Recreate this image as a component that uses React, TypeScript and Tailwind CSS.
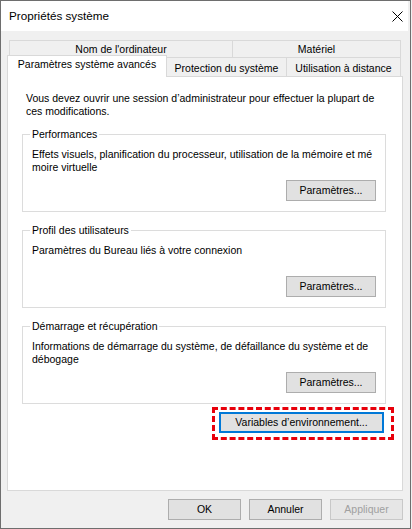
import type { ReactNode } from 'react';

type BtnProps = {
  children: ReactNode;
  className?: string;
  disabled?: boolean;
};

const Btn = ({ children, className = '', disabled }: BtnProps) => (
  <button
    className={`flex items-center justify-center h-[21px] border text-[10.5px] leading-[13px] ${
      disabled
        ? 'bg-[#e6e6e6] border-[#c8c8c8] text-[#a0a0a0]'
        : 'bg-[#e1e1e1] border-[#adadad] text-black'
    } ${className}`}
  >
    {children}
  </button>
);

type GroupProps = {
  title: string;
  children: ReactNode;
};

const GroupBox = ({ title, children }: GroupProps) => (
  <fieldset className="flex flex-col border border-[#dcdcdc] w-[364px] px-[9px] pb-[10px]">
    <legend className="ml-[-2px] px-[2px] leading-[13px]">{title}</legend>
    <p className="mt-[7px] h-[26px] leading-[13px] whitespace-nowrap">{children}</p>
    <Btn className="self-end mt-[6px] w-[90px]">Paramètres...</Btn>
  </fieldset>
);

const App = () => {
  return (
    <div className="w-[412px] h-[529px] bg-[#f0f0f0] font-['Liberation_Sans',Arial,sans-serif] text-[10.5px] text-black">
      <div className="flex flex-col w-[411px] h-[529px] border border-[#6e6e6e]">
        {/* title bar */}
        <div className="flex items-center justify-between h-[30px] mr-[2px] bg-white pl-[8px] pr-[5px]">
          <span className="text-[11.7px]">Propriétés système</span>
          <svg width="11" height="11" viewBox="0 0 11 11">
            <path d="M0.5 0.5 L10.5 10.5 M10.5 0.5 L0.5 10.5" stroke="#000" strokeWidth="1" fill="none" />
          </svg>
        </div>

        <div className="flex flex-col flex-1 pt-[9px] pl-[6px] pr-[7px]">
          {/* tabs */}
          <div className="flex h-[17px] mx-[2px]">
            <div className="w-[223px] border-l border-t border-[#d9d9d9] text-center pt-[2px] leading-[13px]">
              Nom de l'ordinateur
            </div>
            <div className="flex-1 border-l border-t border-r border-[#d9d9d9] text-center pt-[2px] leading-[13px]">
              Matériel
            </div>
          </div>
          <div className="flex items-end h-[19px] pr-[2px] whitespace-nowrap">
            <div className="relative z-10 self-end -mb-px h-[22px] w-[160px] bg-white border-l border-t border-r border-[#d9d9d9] text-center pt-[2px] leading-[13px]">
              Paramètres système avancés
            </div>
            <div className="h-[19px] w-[120px] border-t border-r border-[#d9d9d9] text-center pt-[4px] leading-[13px]">
              Protection du système
            </div>
            <div className="h-[19px] flex-1 border-t border-r border-[#d9d9d9] text-center pt-[4px] leading-[13px]">
              Utilisation à distance
            </div>
          </div>

          {/* panel */}
          <div className="flex flex-col h-[415px] bg-white border border-[#d9d9d9] pt-[15px] pl-[14px]">
            <p className="pl-[4px] leading-[13px] whitespace-nowrap">
              Vous devez ouvrir une session d’administrateur pour effectuer la plupart de
              <br />
              ces modifications.
            </p>

            <div className="flex flex-col gap-[12px] mt-[10px]">
              <GroupBox title="Performances">
                Effets visuels, planification du processeur, utilisation de la mémoire et mé
                <br />
                moire virtuelle
              </GroupBox>
              <GroupBox title="Profil des utilisateurs">
                Paramètres du Bureau liés à votre connexion
              </GroupBox>
              <GroupBox title="Démarrage et récupération">
                Informations de démarrage du système, de défaillance du système et de
                <br />
                débogage
              </GroupBox>
            </div>

            <div className="relative self-end mt-[8px] mr-[18px]">
              <Btn className="w-[165px] border-2 !border-[#0078d7]">Variables d’environnement...</Btn>
              <div className="absolute -left-[7px] -right-[10px] -top-[5px] -bottom-[7px] border-[3px] border-dashed border-[#e8000b]" />
            </div>
          </div>

          {/* footer buttons */}
          <div className="flex justify-end gap-[8px] mt-[8px]">
            <Btn className="w-[73px]">OK</Btn>
            <Btn className="w-[73px]">Annuler</Btn>
            <Btn className="w-[73px]" disabled>
              Appliquer
            </Btn>
          </div>
        </div>
      </div>
    </div>
  );
};

export default App;
